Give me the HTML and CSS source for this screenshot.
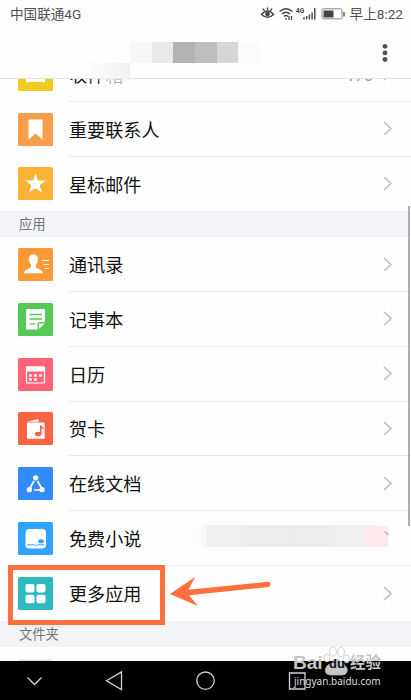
FILE: index.html
```html
<!DOCTYPE html>
<html lang="zh-CN">
<head>
<meta charset="utf-8">
<title>邮箱</title>
<link rel="stylesheet" href="styles.css">
</head>
<body>
<div class="screen">
  <header class="top">
    <div class="status">
      <span class="carrier">中国联通4G</span>
      <svg class="status-icons" width="86" height="18" viewBox="0 0 86 18" fill="none" stroke="#444">
        <path d="M1.500 10.500Q7.500 3.500 13.500 10.500Q7.500 16 1.500 10.500ZM7.500 3.500V6M3 4.500L4.500 7M12 4.500L10.500 7" stroke-width="1.400"/>
        <circle cx="7.500" cy="10" r="2.300" fill="#444" stroke="none"/>
        <path d="M19.500 7.500Q26 2 32.500 7.500M22 10Q26 6.500 30 10M24 12.500Q26 10.500 28 12.500" stroke-width="1.300"/>
        <path d="M25 14.800h2M29 12v4M31.500 12v4" stroke-width="1.300"/>
        <path d="M44 13v2.500M46.700 12v3.500M49.400 10.500v5M52.100 8.500v7M54.800 4v11.500" stroke-width="1.400"/>
        <rect x="62" y="4.800" width="20" height="10" rx="1.500" stroke="#888"/>
        <path d="M84 8v4.500" stroke-width="1.300"/>
        <rect x="63.500" y="6.500" width="10" height="7" fill="#444" stroke="none"/>
        <text class="net" x="36" y="8.500">4G</text>
      </svg>
      <span class="clock">早上8:22</span>
    </div>
    <div class="bar">
      <div class="mosaic"><i class="m1"></i><i class="m2"></i><i class="m3"></i><i class="m4"></i><i class="m5"></i><i class="m6"></i></div>
      <svg class="more" width="6" height="20" viewBox="0 0 6 20" fill="#505052"><circle cx="3" cy="3.300" r="2.400"/><circle cx="3" cy="9.900" r="2.400"/><circle cx="3" cy="16.500" r="2.400"/></svg>
    </div>
    <div class="smudge"></div>
  </header>

  <main class="list">
    <div class="row first">
      <svg class="icon" viewBox="0 0 35 33"><rect width="35" height="33" rx="1.500" fill="#f1cc1f"/><path d="M8 7h19v17.500q-9.500 -1.500 -19 0z" fill="#fff"/></svg>
      <div class="cell"><span>收件<span class="faded">箱</span></span><span class="count">178</span><svg class="chev" viewBox="0 0 10 15"><path d="M1 1l7 6.500L1 14"/></svg></div>
    </div>
    <div class="row">
      <svg class="icon" viewBox="0 0 35 33"><rect width="35" height="33" rx="1.500" fill="#f79d4b"/><path d="M10.500 6.500h14v20l-7-6-7 6z" fill="#fff"/></svg>
      <div class="cell"><span>重要联系人</span><svg class="chev" viewBox="0 0 10 15"><path d="M1 1l7 6.500L1 14"/></svg></div>
    </div>
    <div class="row last">
      <svg class="icon" viewBox="0 0 35 33"><rect width="35" height="33" rx="1.500" fill="#f9b233"/><path d="M17.500 6.500l2.500 7h7.700l-6 4.700 2.200 7.300-6.400-4.300-6.400 4.300 2.200-7.300-6-4.700H15z" fill="#fff"/></svg>
      <div class="cell"><span>星标邮件</span><svg class="chev" viewBox="0 0 10 15"><path d="M1 1l7 6.500L1 14"/></svg></div>
    </div>
    <h2 class="section">应用</h2>
    <div class="row">
      <svg class="icon" viewBox="0 0 35 33"><rect width="35" height="33" rx="1.500" fill="#fb9936"/><path d="M15.500 6.500c3.300 0 5 2.300 4.600 5.300-.2 2-1 3.500-2.100 4.700v2.800c1.500 1.700 6.500 2.300 7.300 5.900H5.700c.8-3.600 5.800-4.200 7.300-5.900v-2.800c-1.100-1.200-1.900-2.700-2.100-4.700-.4-3 1.300-5.300 4.600-5.300z" fill="#fff"/><path d="M23.500 12.500h7.500M25 16.500h6M26.500 20.500H31" stroke="#fff" stroke-width="1.200"/></svg>
      <div class="cell"><span>通讯录</span><svg class="chev" viewBox="0 0 10 15"><path d="M1 1l7 6.500L1 14"/></svg></div>
    </div>
    <div class="row">
      <svg class="icon" viewBox="0 0 35 33"><rect width="35" height="33" rx="1.500" fill="#54c954"/><path d="M9 6h17q1 0 1 1v12h-6q-1.500 0-1.500 1.500V26.500H9q-1 0-1-1V7q0-1 1-1z" fill="#fff"/><path d="M21 20.500h5.500L21 26z" fill="#fff"/><path d="M11.500 11.500h12.500M11.500 16h12.500M11.500 20.800h6" stroke="#54c954" stroke-width="1.300"/></svg>
      <div class="cell"><span>记事本</span><svg class="chev" viewBox="0 0 10 15"><path d="M1 1l7 6.500L1 14"/></svg></div>
    </div>
    <div class="row">
      <svg class="icon" viewBox="0 0 35 33"><rect width="35" height="33" rx="1.500" fill="#ff6379"/><rect x="8.500" y="9" width="18" height="16" rx=".7" fill="none" stroke="#fff" stroke-width="1.200"/><path d="M8 8.500h19v5H8z" fill="#fff"/><path d="M11.200 16.300h2.600v2.400h-2.600zM16.200 16.300h2.600v2.400h-2.600zM21.200 16.300h2.600v2.400h-2.600zM11.200 20.300h2.600v2.400h-2.600zM16.200 20.300h2.600v2.400h-2.600z" fill="#fff"/></svg>
      <div class="cell"><span>日历</span><svg class="chev" viewBox="0 0 10 15"><path d="M1 1l7 6.500L1 14"/></svg></div>
    </div>
    <div class="row">
      <svg class="icon" viewBox="0 0 35 33"><rect width="35" height="33" rx="1.500" fill="#f96343"/><path d="M9 10.500h17q.7 0 .7.700V26q0 .7-.7.700H9.700q-.7 0-.7-.7zM9 9.700l11.500-2.800v2.800z" fill="#fff"/><ellipse cx="20.200" cy="22" rx="3.300" ry="2.300" fill="#f96343"/><path d="M22.700 22v-8.500q.8 2 3 3" fill="none" stroke="#f96343" stroke-width="1.500"/></svg>
      <div class="cell"><span>贺卡</span><svg class="chev" viewBox="0 0 10 15"><path d="M1 1l7 6.500L1 14"/></svg></div>
    </div>
    <div class="row">
      <svg class="icon" viewBox="0 0 35 33"><rect width="35" height="33" rx="1.500" fill="#318bf8"/><path d="M16 14l-4.200 7.500M19.500 14l4.200 7.500M16 23h6" stroke="#fff" stroke-width="1.700"/><circle cx="17.700" cy="10.800" r="2.600" fill="#fff"/><circle cx="11.300" cy="22.700" r="2.600" fill="#fff"/><circle cx="24" cy="22.700" r="2.600" fill="#fff"/></svg>
      <div class="cell"><span>在线文档</span><svg class="chev" viewBox="0 0 10 15"><path d="M1 1l7 6.500L1 14"/></svg></div>
    </div>
    <div class="row">
      <svg class="icon" viewBox="0 0 35 33"><rect width="35" height="33" rx="1.500" fill="#2fa3ff"/><rect x="7.500" y="7" width="20.500" height="19.500" rx="4" fill="#fff"/><path d="M9 22.800h6.500q1.300 0 2 1.200.7-1.200 2-1.200h7" fill="none" stroke="#2fa3ff" stroke-width="1"/><ellipse cx="23" cy="19.200" rx="2.900" ry="2" fill="#2fa3ff"/></svg>
      <div class="cell"><span>免费小说</span></div>
      <div class="blurred"></div>
      <svg class="tip" width="6" height="5" viewBox="0 0 6 5"><path d="M.5.5L4.500 4" stroke="#bbb" stroke-width="1.500"/></svg>
    </div>
    <div class="row last">
      <svg class="icon" viewBox="0 0 35 33"><rect width="35" height="33" rx="1.500" fill="#2eb9bf"/><g fill="#fff"><rect x="7.500" y="7" width="9" height="8.500" rx="2"/><rect x="18.500" y="7" width="9" height="8.500" rx="2"/><rect x="7.500" y="17.700" width="9" height="8.500" rx="2"/><rect x="18.500" y="17.700" width="9" height="8.500" rx="2"/></g></svg>
      <div class="cell"><span>更多应用</span><svg class="chev" viewBox="0 0 10 15"><path d="M1 1l7 6.500L1 14"/></svg></div>
      <div class="highlight"></div>
      <svg class="arrow" width="104" height="36" viewBox="0 0 104 36"><path d="M1 18L26 1 19.500 13.800 98.500 5.800a2.600 2.600 0 0 1 .5 5.200L20 19.200 29 30z" fill="#ff6e3d"/></svg>
    </div>
    <h2 class="section">文件夹</h2>
    <div class="peek"></div>
    <div class="scroll"></div>
  </main>

  <nav class="nav">
    <svg width="411" height="39" viewBox="0 0 411 39" fill="none" stroke="#d4d4d4" stroke-width="1.300">
      <path d="M27.500 16.500l7 7 7-7M121.500 11v17.500l-15-8.700zM289.500 12h15.500v16h-15.500z"/><circle cx="205.500" cy="19.700" r="8.700"/>
    </svg>
  </nav>

  <div class="watermark">
    <svg class="paw" width="28" height="31" viewBox="0 0 28 31" fill="#fff" fill-opacity=".8" stroke="#bbb" stroke-width=".7"><ellipse cx="11" cy="5.500" rx="3.300" ry="4.500"/><ellipse cx="19" cy="6" rx="3.300" ry="4.500"/><ellipse cx="5" cy="12" rx="3" ry="4"/><ellipse cx="24.500" cy="13" rx="3" ry="4"/><path d="M15 13.500c4.500 0 5 3.500 8 6 4.500 4.500 2 9.500-3 9.500H9c-6 0-7.500-5-3.500-9.500 4-2.500 5-6 9.500-6z" fill="#c6c6c6" fill-opacity="1"/></svg>
    <div class="brand"><b class="bai">Bai</b><b class="du">du</b><b class="cn">经验</b></div>
    <div class="site">jingyan.baidu.com</div>
  </div>
</div>
</body>
</html>
```
FILE: styles.css
```css
* { box-sizing: border-box; }
body { margin: 0; font-family: Roboto, "Noto Sans CJK SC", sans-serif; background: #fff; }
.screen { position: relative; width: 411px; height: 700px; overflow: hidden; display: flex; flex-direction: column; background: #fefefe; }

.top { position: relative; z-index: 2; flex: none; height: 79px; background: #fefefe; border-bottom: 1px solid #e3e3e3; }
.status { display: flex; align-items: center; height: 26px; padding: 0 8px 0 10px; font-size: 13.600px; color: #505050; }
.carrier { flex: 1; }
.status-icons { margin-right: 4px; }
.net { font: bold 6.500px Roboto, sans-serif; fill: #444; stroke: none; }
.clock { white-space: nowrap; font-size: 13.600px; }
.bar { display: flex; justify-content: space-between; height: 52px; padding: 16px 23px 0 130px; }
.more { margin-top: 1px; }
.mosaic { display: flex; width: 130px; height: 21px; }
.mosaic i { width: 21.700px; }
.m1 { background: #f8f8f8; }
.m2 { background: #e9e9e9; }
.m3 { background: #b3b3b3; }
.m4 { background: #bebebe; }
.m5 { background: #d6d6d6; }
.m6 { background: #fbfbfb; }
.smudge { position: absolute; left: 84px; top: 63px; width: 46px; height: 20px; background: linear-gradient(90deg, rgba(254,254,254,0), #f6f6f6 55%, #f0f0f0); -webkit-mask-image: linear-gradient(#000 65%, transparent); mask-image: linear-gradient(#000 65%, transparent); }

.list { position: relative; flex: none; height: 582px; overflow: hidden; }
.row { position: relative; display: flex; align-items: center; height: 54.750px; padding-left: 18px; }
.row.first { margin-top: -32px; }
.icon { flex: none; width: 35px; height: 33px; margin-right: 16px; }
.cell { flex: 1; display: flex; align-items: center; justify-content: space-between; height: 100%; padding: 0 18px 0 0; border-bottom: 1px solid #e9e9eb; font-size: 18.100px; color: #111; }
.last .cell { border-bottom: 0; }
.faded { color: #aaa; }
.count { margin: 3px 10px 0 auto; font-size: 16px; color: #999; }
.chev { width: 10px; height: 15px; fill: none; stroke: #c0c0c5; stroke-width: 1.700; }
.section { height: 26px; margin: 0; padding-left: 19px; line-height: 27px; font-size: 13.300px; font-weight: 400; color: #747478; background: #f2f3f7; }
.blurred { position: absolute; left: 190px; top: 14px; width: 216px; height: 22px; background: linear-gradient(90deg, transparent, #f9f9f9 16px, #f0f0f0 17px, #ececec 100px, #f0f0f0 175px, #fde9e9 176px, #fde9e9 198px, #fdfdfd 199px, transparent); border-radius: 8px 38px 0 0 / 8px 16px 0 0; }
.tip { position: absolute; left: 384px; top: 20px; }
.highlight { position: absolute; left: 8px; top: -1px; width: 157px; height: 60px; border: 5px solid #ff6e3d; z-index: 1; }
.arrow { position: absolute; left: 169px; top: 10px; }
.peek { width: 33px; height: 2px; margin: 12px 0 0 19px; background: #e8eaf0; }
.scroll { position: absolute; right: 1px; top: 127px; width: 2px; height: 320px; background: #aeaeb0; }

.nav { flex: none; height: 39px; background: #000; }
.nav svg { display: block; }

.watermark { position: absolute; left: 293px; top: 645px; width: 92px; color: #c6c6c6; }
.paw { position: absolute; left: 29px; top: 1px; }
.brand { position: relative; display: flex; align-items: center; height: 31px; padding-top: 5px; font-family: "Liberation Sans", "Noto Sans CJK SC", sans-serif; font-size: 19px; line-height: 20px; }
.bai { width: 30px; }
.du { width: 24px; margin-left: 2px; padding-top: 1px; font-size: 13px; text-align: center; color: #111; }
.cn { margin-left: 1px; font-size: 15.500px; white-space: nowrap; }
.site { position: relative; margin: -2px 0 0 1px; font-family: "Noto Sans", sans-serif; font-size: 10px; line-height: 14px; color: #ddd; }
```
